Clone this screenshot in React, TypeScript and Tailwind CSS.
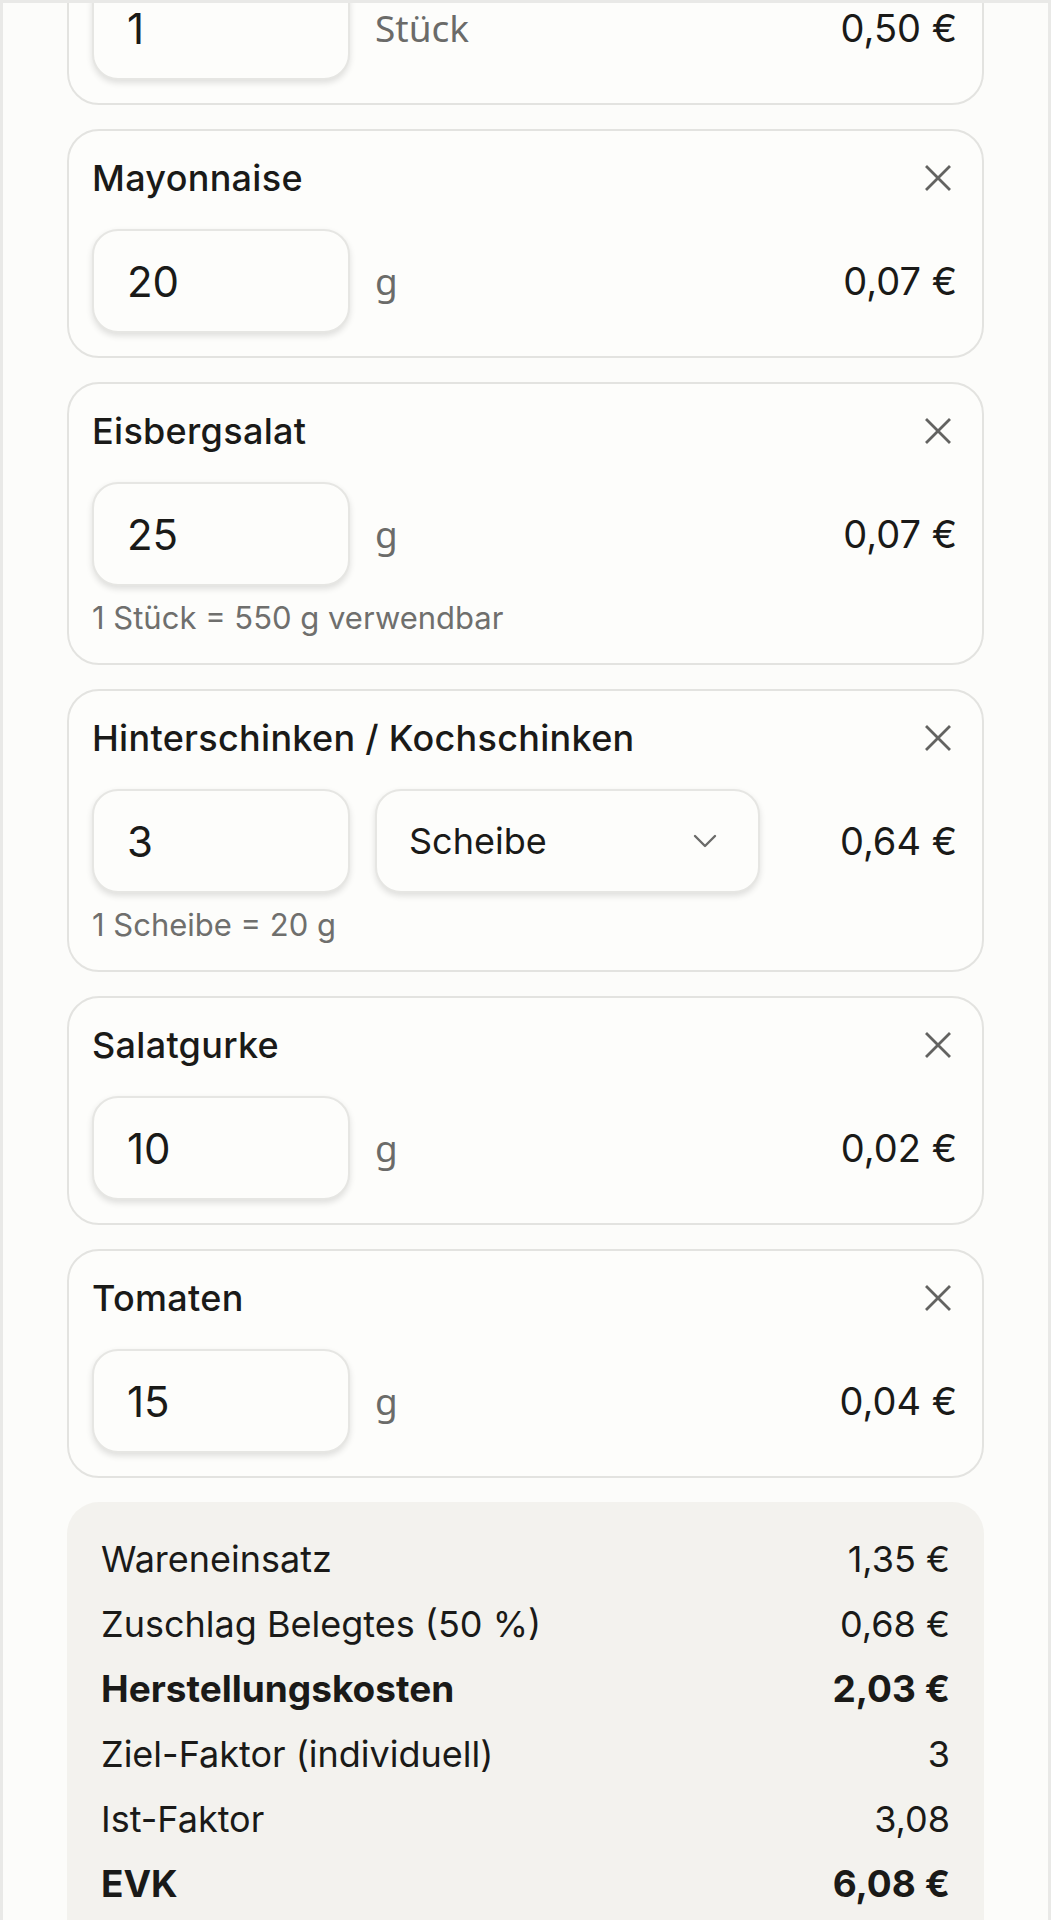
import { useState } from 'react'

type Item = {
  name: string
  qty: string
  unit: string
  price: string
  select?: boolean
  hint?: string
}

const items: Item[] = [
  { name: 'Brötchen', qty: '1', unit: 'Stück', price: '0,50 €' },
  { name: 'Mayonnaise', qty: '20', unit: 'g', price: '0,07 €' },
  { name: 'Eisbergsalat', qty: '25', unit: 'g', price: '0,07 €', hint: '1 Stück = 550 g verwendbar' },
  { name: 'Hinterschinken / Kochschinken', qty: '3', unit: 'Scheibe', price: '0,64 €', select: true, hint: '1 Scheibe = 20 g' },
  { name: 'Salatgurke', qty: '10', unit: 'g', price: '0,02 €' },
  { name: 'Tomaten', qty: '15', unit: 'g', price: '0,04 €' }
]

const summary = [
  { label: 'Wareneinsatz', value: '1,35 €' },
  { label: 'Zuschlag Belegtes (50 %)', value: '0,68 €' },
  { label: 'Herstellungskosten', value: '2,03 €', bold: true },
  { label: 'Ziel-Faktor (individuell)', value: '3' },
  { label: 'Ist-Faktor', value: '3,08' },
  { label: 'EVK', value: '6,08 €', bold: true }
]

function CloseIcon() {
  return (
    <svg width="26" height="26" viewBox="0 0 26 26" fill="none" stroke="#636361" strokeWidth="2.8" strokeLinecap="square">
      <path d="M2 2L24 24M24 2L2 24" />
    </svg>
  )
}

function Chevron() {
  return (
    <svg width="26" height="16" viewBox="0 0 26 16" fill="none" stroke="#6b6b69" strokeWidth="2.4" strokeLinecap="round" strokeLinejoin="round">
      <path d="M3 3L13 13L23 3" />
    </svg>
  )
}

function IngredientCard({ item }: { item: Item }) {
  const [qty, setQty] = useState(item.qty)
  return (
    <div className="rounded-[32px] border-2 border-[#e3e3e0] bg-[#fdfdfb] p-[23px]">
      <div className="flex h-[48px] items-center justify-between">
        <span className="text-[36px] font-medium tracking-[0.3px] text-[#1a1a18]">{item.name}</span>
        <button className="mr-[8px] flex items-center justify-center">
          <CloseIcon />
        </button>
      </div>
      <div className="mt-[27px] flex items-center gap-[25px]">
        <input
          value={qty}
          onChange={(e) => setQty(e.target.value)}
          className="h-[104px] w-[258px] rounded-[26px] border-2 border-[#e6e6e3] bg-[#fdfdfb] pl-[33px] text-[42px] text-[#1a1a18] shadow-[0_3px_6px_rgba(0,0,0,0.12)] outline-none"
        />
        {item.select ? (
          <div className="flex h-[104px] w-[385px] items-center justify-between rounded-[26px] border-2 border-[#e6e6e3] bg-[#fdfdfb] pl-[32px] pr-[40px] shadow-[0_3px_6px_rgba(0,0,0,0.12)]">
            <span className="text-[36px] text-[#1a1a18]">{item.unit}</span>
            <Chevron />
          </div>
        ) : (
          <span className="text-[37px] text-[#6b6b69] [font-family:'Noto_Sans',sans-serif]">{item.unit}</span>
        )}
        <span className="flex-1 pr-[2px] text-right text-[38px] text-[#1a1a18]">{item.price}</span>
      </div>
      {item.hint && <div className="mt-[10px] text-[31px] leading-[44px] text-[#6f6f6d]">{item.hint}</div>}
    </div>
  )
}

export default function App() {
  return (
    <div className="h-[1920px] overflow-hidden border-x-[3px] border-t-[3px] border-[#e9e9e7] bg-[#fcfcfa] font-['Inter',sans-serif]">
      <div className="-mt-[127px] flex flex-col gap-[24px] px-[64px]">
        {items.map((it) => (
          <IngredientCard key={it.name} item={it} />
        ))}
        <div className="rounded-[32px] bg-[#f3f2ee] px-[34px] pt-[24px] pb-[40px]">
          {summary.map((r) => (
            <div
              key={r.label}
              className={`flex h-[65px] items-center justify-between text-[#1a1a18] ${r.bold ? 'text-[37px] font-bold' : 'text-[36px]'}`}
            >
              <span>{r.label}</span>
              <span>{r.value}</span>
            </div>
          ))}
        </div>
      </div>
    </div>
  )
}
